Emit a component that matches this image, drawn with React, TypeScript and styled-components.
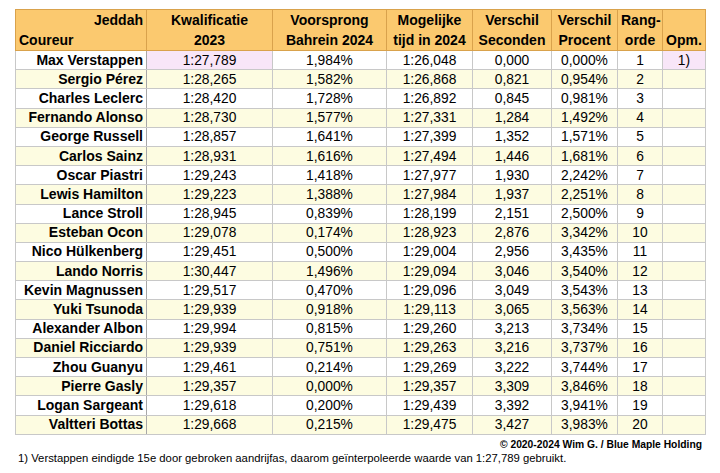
import styled, { createGlobalStyle } from "styled-components";

interface Row {
  name: string;
  quali: string;
  lead: string;
  time: string;
  secs: string;
  pct: string;
  note?: string;
}

const rows: Row[] = [
  { name: "Max Verstappen", quali: "1:27,789", lead: "1,984%", time: "1:26,048", secs: "0,000", pct: "0,000%", note: "1)" },
  { name: "Sergio Pérez", quali: "1:28,265", lead: "1,582%", time: "1:26,868", secs: "0,821", pct: "0,954%" },
  { name: "Charles Leclerc", quali: "1:28,420", lead: "1,728%", time: "1:26,892", secs: "0,845", pct: "0,981%" },
  { name: "Fernando Alonso", quali: "1:28,730", lead: "1,577%", time: "1:27,331", secs: "1,284", pct: "1,492%" },
  { name: "George Russell", quali: "1:28,857", lead: "1,641%", time: "1:27,399", secs: "1,352", pct: "1,571%" },
  { name: "Carlos Sainz", quali: "1:28,931", lead: "1,616%", time: "1:27,494", secs: "1,446", pct: "1,681%" },
  { name: "Oscar Piastri", quali: "1:29,243", lead: "1,418%", time: "1:27,977", secs: "1,930", pct: "2,242%" },
  { name: "Lewis Hamilton", quali: "1:29,223", lead: "1,388%", time: "1:27,984", secs: "1,937", pct: "2,251%" },
  { name: "Lance Stroll", quali: "1:28,945", lead: "0,839%", time: "1:28,199", secs: "2,151", pct: "2,500%" },
  { name: "Esteban Ocon", quali: "1:29,078", lead: "0,174%", time: "1:28,923", secs: "2,876", pct: "3,342%" },
  { name: "Nico Hülkenberg", quali: "1:29,451", lead: "0,500%", time: "1:29,004", secs: "2,956", pct: "3,435%" },
  { name: "Lando Norris", quali: "1:30,447", lead: "1,496%", time: "1:29,094", secs: "3,046", pct: "3,540%" },
  { name: "Kevin Magnussen", quali: "1:29,517", lead: "0,470%", time: "1:29,096", secs: "3,049", pct: "3,543%" },
  { name: "Yuki Tsunoda", quali: "1:29,939", lead: "0,918%", time: "1:29,113", secs: "3,065", pct: "3,563%" },
  { name: "Alexander Albon", quali: "1:29,994", lead: "0,815%", time: "1:29,260", secs: "3,213", pct: "3,734%" },
  { name: "Daniel Ricciardo", quali: "1:29,939", lead: "0,751%", time: "1:29,263", secs: "3,216", pct: "3,737%" },
  { name: "Zhou Guanyu", quali: "1:29,461", lead: "0,214%", time: "1:29,269", secs: "3,222", pct: "3,744%" },
  { name: "Pierre Gasly", quali: "1:29,357", lead: "0,000%", time: "1:29,357", secs: "3,309", pct: "3,846%" },
  { name: "Logan Sargeant", quali: "1:29,618", lead: "0,200%", time: "1:29,439", secs: "3,392", pct: "3,941%" },
  { name: "Valtteri Bottas", quali: "1:29,668", lead: "0,215%", time: "1:29,475", secs: "3,427", pct: "3,983%" },
];

const widths = [131, 126, 114, 86, 79, 66, 45, 43];

const GlobalStyle = createGlobalStyle`
  body {
    margin: 0;
    background: #ffffff;
    font-family: "Liberation Sans", Arial, sans-serif;
    color: #000000;
  }
`;

const App = () => {
  return (
    <Page>
      <GlobalStyle />
      <Table>
        <colgroup>
          {widths.map((w, i) => (
            <col key={i} style={{ width: w }} />
          ))}
        </colgroup>
        <thead>
          <tr>
            <HeadCell>
              <HeadLine $align="right">Jeddah</HeadLine>
              <HeadLine $align="left">Coureur</HeadLine>
            </HeadCell>
            <HeadCell>
              <HeadLine>Kwalificatie</HeadLine>
              <HeadLine>2023</HeadLine>
            </HeadCell>
            <HeadCell>
              <HeadLine>Voorsprong</HeadLine>
              <HeadLine>Bahrein 2024</HeadLine>
            </HeadCell>
            <HeadCell>
              <HeadLine>Mogelijke</HeadLine>
              <HeadLine>tijd in 2024</HeadLine>
            </HeadCell>
            <HeadCell>
              <HeadLine>Verschil</HeadLine>
              <HeadLine>Seconden</HeadLine>
            </HeadCell>
            <HeadCell>
              <HeadLine>Verschil</HeadLine>
              <HeadLine>Procent</HeadLine>
            </HeadCell>
            <HeadCell>
              <HeadLine>Rang-</HeadLine>
              <HeadLine>orde</HeadLine>
            </HeadCell>
            <HeadCell>
              <HeadLine>&nbsp;</HeadLine>
              <HeadLine>Opm.</HeadLine>
            </HeadCell>
          </tr>
        </thead>
        <tbody>
          {rows.map((r, i) => (
            <BodyRow key={r.name} $striped={i % 2 === 1}>
              <NameCell>{r.name}</NameCell>
              <Cell $mark={i === 0}>{r.quali}</Cell>
              <Cell>{r.lead}</Cell>
              <Cell>{r.time}</Cell>
              <Cell>{r.secs}</Cell>
              <Cell>{r.pct}</Cell>
              <Cell>{i + 1}</Cell>
              <Cell $mark={!!r.note}>{r.note}</Cell>
            </BodyRow>
          ))}
        </tbody>
      </Table>
      <Copyright>© 2020-2024 Wim G. / Blue Maple Holding</Copyright>
      <Footnote>1) Verstappen eindigde 15e door gebroken aandrijfas, daarom geïnterpoleerde waarde van 1:27,789 gebruikt.</Footnote>
    </Page>
  );
};

export default App;

const Page = styled.div`
  width: 690px;
  padding: 9px 0 0 15px;
  display: flex;
  flex-direction: column;
`;

const Table = styled.table`
  width: 690px;
  table-layout: fixed;
  border-collapse: collapse;
  border: 1px solid #8c8c8c;
`;

const HeadCell = styled.th`
  height: 39px;
  padding: 0 3px;
  background: #fbc96f;
  border: 1px solid #d9a24c;
  font-size: 14px;
  font-weight: bold;
  text-align: center;
  vertical-align: middle;
  white-space: nowrap;
`;

const HeadLine = styled.div<{ $align?: "left" | "right" | "center" }>`
  line-height: 20px;
  text-align: ${(props) => props.$align ?? "center"};
`;

const BodyRow = styled.tr<{ $striped: boolean }>`
  height: 19.2px;
  background: ${(props) => (props.$striped ? "#fdfce1" : "#ffffff")};
`;

const NameCell = styled.td`
  padding: 0 3px 0 0;
  border: 1px solid #c8c8c8;
  border-right-color: #a8a8a8;
  font-size: 14px;
  font-weight: bold;
  text-align: right;
  white-space: nowrap;
  line-height: 17px;
`;

const Cell = styled.td<{ $mark?: boolean }>`
  padding: 0;
  border: 1px solid #c8c8c8;
  font-size: 13.8px;
  text-align: center;
  white-space: nowrap;
  line-height: 17px;
  background: ${(props) => (props.$mark ? "#f8e6f8" : "transparent")};
`;

const Copyright = styled.div`
  margin-top: 3px;
  padding-right: 3px;
  font-size: 10.3px;
  font-weight: bold;
  text-align: right;
  line-height: 13px;
`;

const Footnote = styled.div`
  padding-left: 3px;
  font-size: 11.3px;
  line-height: 14px;
  white-space: nowrap;
`;
